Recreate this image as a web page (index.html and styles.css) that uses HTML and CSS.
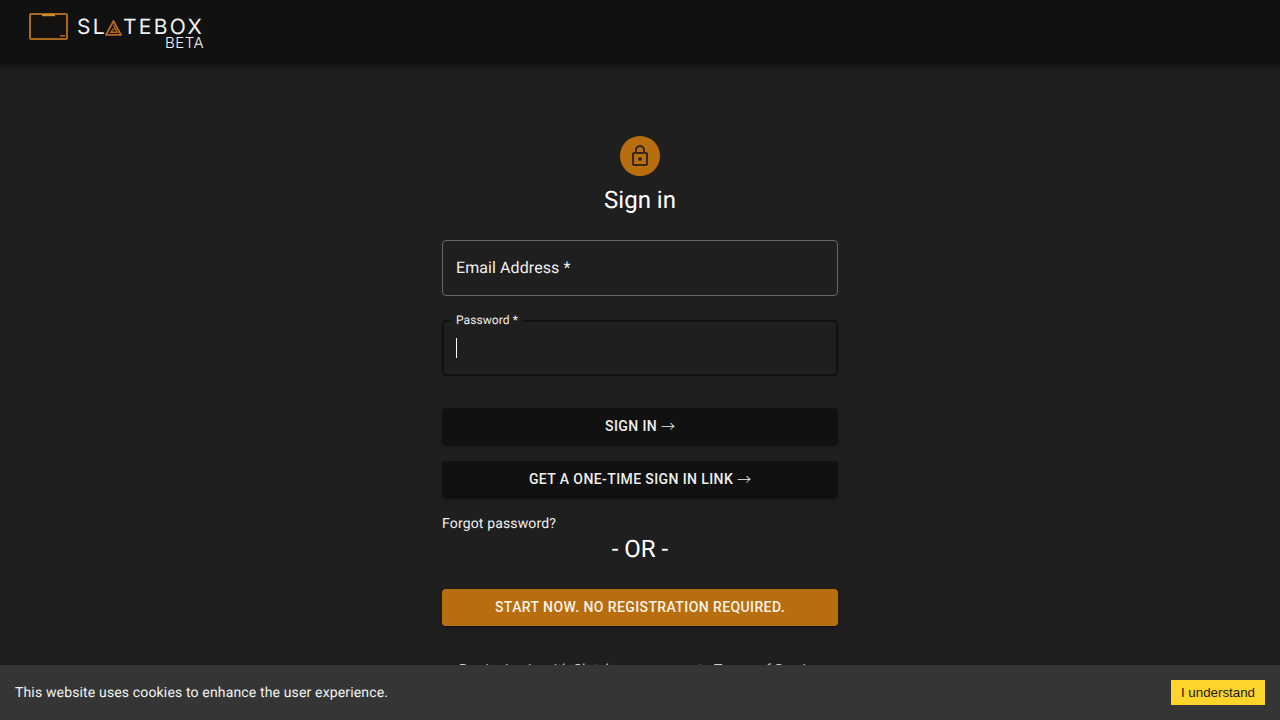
FILE: index.html
```html
<!DOCTYPE html>
<html lang="en">
<head>
<meta charset="utf-8">
<title>Slatebox - Sign in</title>
<link rel="stylesheet" href="styles.css">
</head>
<body>
<header class="topbar">
  <a class="logo" href="#">
    <svg class="logo-box" width="39" height="27" viewBox="0 0 39 27" aria-hidden="true">
      <rect x="1" y="1" width="37" height="25" rx="1" fill="#141210" stroke="#a9691a" stroke-width="2"/>
      <rect x="13" y="1" width="13" height="2.2" fill="#c98a30"/>
      <rect x="31" y="22" width="5" height="1.6" fill="#a9691a"/>
    </svg>
    <div class="logo-words">
      <div class="logo-name">
        <span>SL</span>
        <svg class="logo-a" width="17" height="16" viewBox="0 0 16 15" aria-hidden="true">
          <path d="M8 1 15 14H1Z" fill="none" stroke="#b8691a" stroke-width="1.8"/>
          <path d="M8 5 11.5 11.5H5.5L7.6 8.5H9" fill="none" stroke="#b8691a" stroke-width="1.2"/>
        </svg>
        <span>TEBOX</span>
      </div>
      <div class="logo-beta">BETA</div>
    </div>
  </a>
</header>

<main class="signin">
  <div class="avatar">
    <svg width="24" height="24" viewBox="0 0 24 24" aria-hidden="true">
      <path fill="#33291a" d="M18 8h-1V6c0-2.76-2.24-5-5-5S7 3.24 7 6v2H6c-1.1 0-2 .9-2 2v10c0 1.1.9 2 2 2h12c1.1 0 2-.9 2-2V10c0-1.1-.9-2-2-2zM9 6c0-1.66 1.34-3 3-3s3 1.34 3 3v2H9V6zm9 14H6V10h12v10zm-6-3c1.1 0 2-.9 2-2s-.9-2-2-2-2 .9-2 2 .9 2 2 2z"/>
    </svg>
  </div>
  <h1 class="title">Sign in</h1>
  <form class="form">
    <div class="field field-idle">
      <span class="field-text">Email Address *</span>
    </div>
    <div class="field field-focus">
      <span class="field-label">Password *</span>
      <span class="caret"></span>
    </div>
    <button type="button" class="btn btn-dark btn-first">SIGN IN <span class="arrow">→</span></button>
    <button type="button" class="btn btn-dark btn-second">GET A ONE-TIME SIGN IN LINK <span class="arrow">→</span></button>
    <a class="forgot" href="#">Forgot password?</a>
    <div class="or">- OR -</div>
    <button type="button" class="btn btn-orange">START NOW. NO REGISTRATION REQUIRED.</button>
    <p class="terms">By signing in with Slatebox you agree to Terms of Service</p>
  </form>
</main>

<div class="cookie">
  <span class="cookie-text">This website uses cookies to enhance the user experience.</span>
  <button type="button" class="cookie-btn">I understand</button>
</div>
</body>
</html>
```
FILE: styles.css
```css
* { box-sizing: border-box; }
html, body { height: 100%; }
body {
  margin: 0;
  height: 720px;
  overflow: hidden;
  background: #1f1f1f;
  color: #fff;
  font-family: Roboto, "Liberation Sans", sans-serif;
  text-rendering: geometricPrecision;
}
.topbar {
  height: 64px;
  background: #111;
  box-shadow: 0 2px 4px -1px rgba(0,0,0,.2), 0 4px 5px rgba(0,0,0,.14), 0 1px 10px rgba(0,0,0,.12);
  padding: 13px 0 0 29px;
}
.logo {
  display: flex;
  align-items: flex-start;
  gap: 9px;
  color: #f2f2f2;
  text-decoration: none;
}
.logo-box { display: block; flex: none; }
.logo-words { width: 127px; padding-top: 5px; }
.logo-name {
  display: flex;
  align-items: center;
  height: 20px;
  font-family: Inter, sans-serif;
  font-size: 21px;
  font-weight: 400;
  letter-spacing: 2.3px;
  line-height: 20px;
}
.logo-a { margin: 0 1px 0 -2px; flex: none; }
.logo-beta {
  text-align: right;
  font-family: Inter, sans-serif;
  font-size: 15px;
  font-weight: 300;
  letter-spacing: .5px;
  line-height: 10px;
}
.signin {
  width: 396px;
  margin: 72px auto 0;
  display: flex;
  flex-direction: column;
  align-items: center;
}
.avatar {
  width: 40px;
  height: 40px;
  border-radius: 50%;
  background: #b86e0e;
  display: flex;
  align-items: center;
  justify-content: center;
}
.title {
  margin: 8px 0 0;
  font-size: 24px;
  font-weight: 400;
  line-height: 32px;
}
.form { width: 100%; margin-top: 24px; display: flex; flex-direction: column; }
.field {
  position: relative;
  height: 56px;
  border-radius: 4px;
  display: flex;
  align-items: center;
  padding: 0 13px;
}
.field-idle { border: 1px solid #666; padding-bottom: 2px; }
.field-focus {
  margin-top: 24px;
  border: 2px solid #111;
  padding: 0 12px;
  box-shadow: 0 0 6px rgba(0,0,0,.12);
}
.field-text { font-size: 16px; letter-spacing: .08px; color: #f0f0f0; }
.field-label {
  position: absolute;
  left: 7px;
  top: -10px;
  padding: 0 5px;
  background: #1f1f1f;
  font-size: 12px;
  line-height: 16px;
  letter-spacing: .08px;
  color: #f0f0f0;
}
.caret { width: 1px; height: 20px; background: #fff; }
.btn {
  width: 100%;
  height: 37px;
  border: 0;
  padding: 0 0 2px;
  border-radius: 4px;
  font-family: inherit;
  font-size: 14px;
  line-height: 20px;
  font-weight: 500;
  letter-spacing: .4px;
  color: #eee;
  box-shadow: 0 3px 1px -2px rgba(0,0,0,.2), 0 2px 2px rgba(0,0,0,.14), 0 1px 5px rgba(0,0,0,.12);
}
.arrow { font-family: "Noto Sans CJK SC", sans-serif; font-weight: 300; letter-spacing: 0; line-height: 1; }
.btn-dark { background: #111; }
.btn-first { margin-top: 32px; }
.btn-second { margin-top: 16px; }
.btn-orange { background: #b86e0e; margin-top: 25px; color: #f8f2e8; }
.forgot {
  margin-top: 16px;
  align-self: flex-start;
  font-size: 14px;
  line-height: 20px;
  letter-spacing: .15px;
  color: #f0f0f0;
  text-decoration: none;
}
.or {
  text-align: center;
  font-size: 24px;
  line-height: 30px;
  color: #fff;
}
.terms {
  margin: 34px 0 0;
  text-align: center;
  font-size: 14px;
  line-height: 20px;
  letter-spacing: .15px;
  color: #d0d0d0;
}
.cookie {
  position: fixed;
  left: 0;
  right: 0;
  bottom: 0;
  height: 55px;
  background: #353535;
  display: flex;
  align-items: center;
  justify-content: space-between;
  padding: 0 15px;
}
.cookie-text { font-size: 14px; letter-spacing: .15px; color: #f2f2f2; }
.cookie-btn {
  width: 94px;
  height: 25px;
  padding: 0;
  border: 0;
  background: #ffd42a;
  color: #1a1a1a;
  font-family: "Liberation Sans", Arial, sans-serif;
  font-size: 13.33px;
}
```
